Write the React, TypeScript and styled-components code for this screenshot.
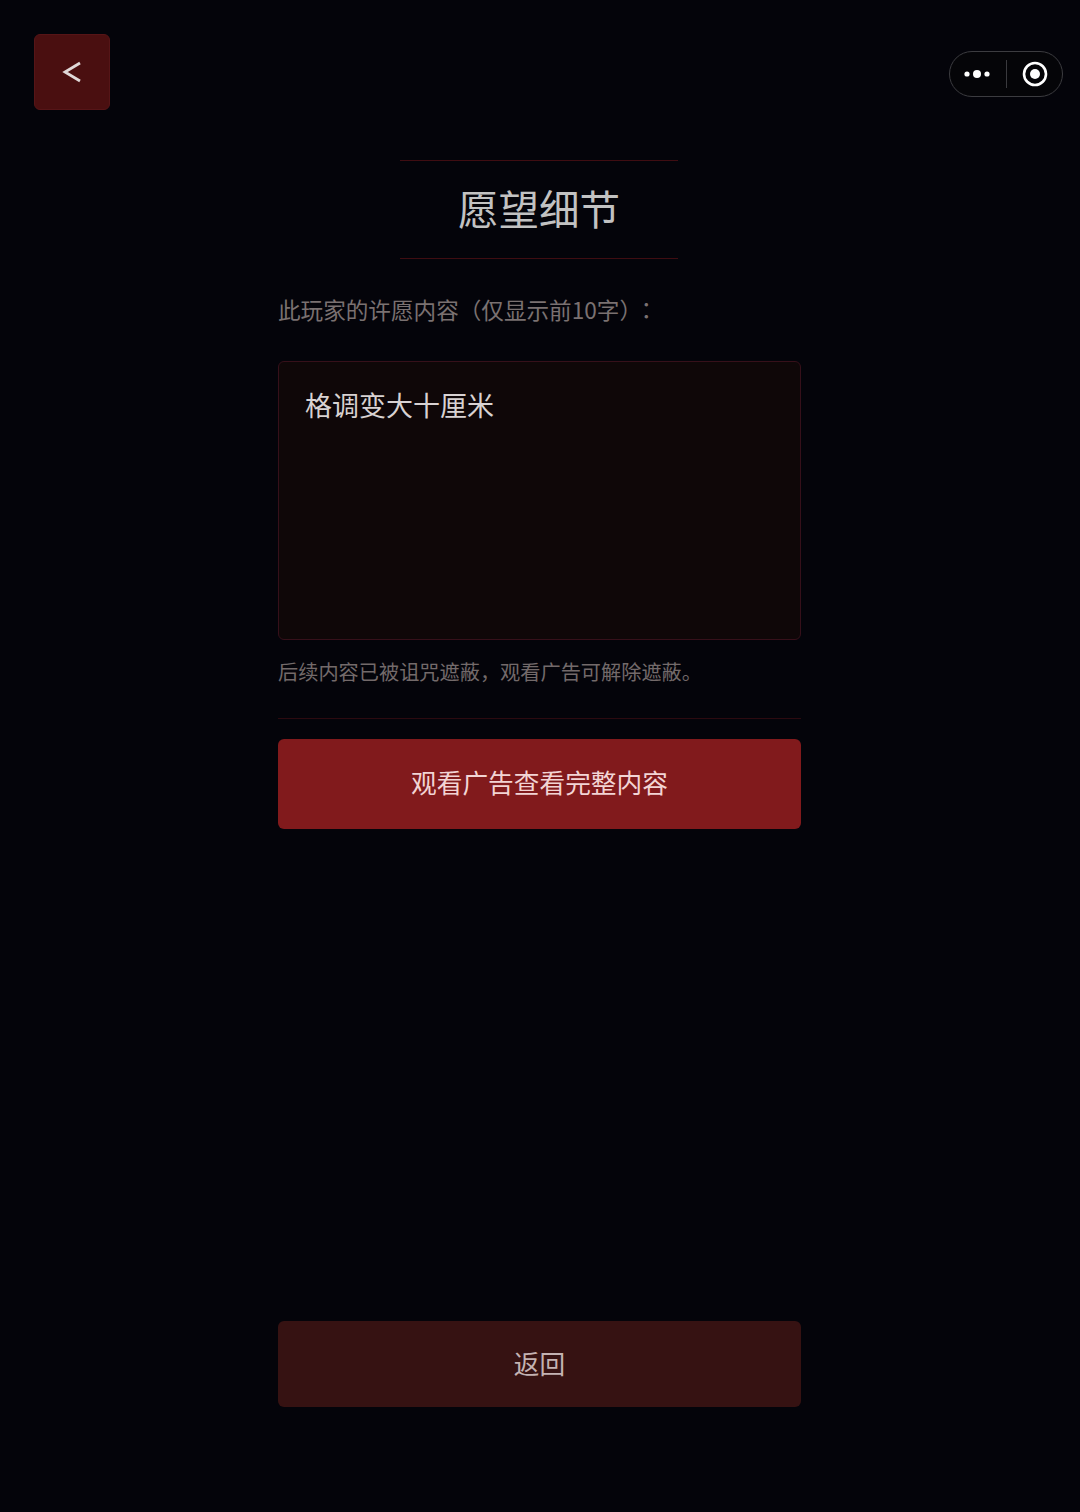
import React from 'react';
import styled, { createGlobalStyle } from 'styled-components';

const GlobalStyle = createGlobalStyle`
  html, body {
    margin: 0;
    padding: 0;
    background: #04040a;
  }
  * {
    box-sizing: border-box;
  }
`;

const Page = styled.div`
  position: relative;
  width: 1080px;
  height: 1512px;
  padding: 34px 34px 105px;
  display: flex;
  flex-direction: column;
  background: #04040a;
  font-family: 'Noto Sans CJK SC', 'Noto Sans', sans-serif;
  text-spacing-trim: space-all;
  overflow: hidden;
`;

const BackButton = styled.button`
  width: 76px;
  height: 76px;
  padding: 0;
  display: flex;
  align-items: center;
  justify-content: center;
  align-self: flex-start;
  background: #4a0f10;
  border: 1px solid #561517;
  border-radius: 6px;
  color: #e0d8d8;
`;

// Капсула мини-программы
const Capsule = styled.div`
  position: absolute;
  top: 51px;
  left: 949px;
  width: 114px;
  height: 46px;
  display: flex;
  align-items: center;
  border: 1px solid #3c3c40;
  border-radius: 23px;
  background: #050508;
`;

const CapsulePart = styled.div<{ $shift: number }>`
  flex: 1;
  height: 100%;
  padding-left: ${props => (props.$shift > 0 ? props.$shift : 0)}px;
  padding-right: ${props => (props.$shift < 0 ? -props.$shift : 0)}px;
  display: flex;
  align-items: center;
  justify-content: center;
`;

const CapsuleDivider = styled.div`
  width: 1px;
  height: 28px;
  background: #3a3a3e;
`;

const TitleBlock = styled.div`
  width: 278px;
  height: 99px;
  margin: 50px 0 0 366px;
  padding-bottom: 4px;
  display: flex;
  align-items: center;
  justify-content: center;
  border-top: 1px solid #3f0d12;
  border-bottom: 1px solid #3f0d12;
`;

const Title = styled.h1`
  margin: 0;
  font-size: 40.5px;
  line-height: 50px;
  font-weight: 400;
  color: #c2c2c2;
`;

const Column = styled.div`
  width: 523px;
  margin-left: 244px;
  flex: 1;
  display: flex;
  flex-direction: column;
`;

const Label = styled.p`
  margin: 35px 0 0;
  font-size: 22.6px;
  line-height: 32px;
  color: #7a7171;
  white-space: nowrap;
`;

// Скобка и двоеточие: двоеточие по центру клетки, как в оригинале
const ClosingPunctuation = styled.span`
  font-family: 'Noto Sans CJK TC', sans-serif;
  letter-spacing: -7px;
`;

const WishBox = styled.div`
  height: 279px;
  margin-top: 35px;
  padding: 23px 26px;
  background: #0f0708;
  border: 1px solid #36101a;
  border-radius: 6px;
`;

const WishText = styled.p`
  margin: 0;
  font-size: 27px;
  line-height: 40px;
  color: #d8d2d2;
`;

const Note = styled.p`
  margin: 17px 0 0;
  font-size: 20.2px;
  line-height: 30px;
  color: #736a6a;
  white-space: nowrap;
`;

const Divider = styled.div`
  height: 1px;
  margin-top: 31px;
  background: #2c0a10;
`;

const ActionButton = styled.button<{ $muted?: boolean }>`
  width: 100%;
  height: ${props => (props.$muted ? '86px' : '90px')};
  margin-top: ${props => (props.$muted ? 'auto' : '20px')};
  padding: 0 0 ${props => (props.$muted ? '2px' : '5px')};
  border: none;
  border-radius: 6px;
  background: ${props => (props.$muted ? '#361212' : '#811a1c')};
  color: ${props => (props.$muted ? '#c4b2b2' : '#f2d4d4')};
  font-family: inherit;
  font-size: 25.7px;
  line-height: 36px;
`;

const App: React.FC = () => {
  return (
    <Page>
      <GlobalStyle />
      <BackButton aria-label="返回">
        <svg width="20" height="24" viewBox="0 0 20 24" fill="none" stroke="currentColor" strokeWidth="2.8">
          <path d="M18 3 L3 12 L18 21" />
        </svg>
      </BackButton>

      <Capsule>
        <CapsulePart $shift={-1}>
          <svg width="26" height="10" viewBox="0 0 26 10" fill="#ffffff">
            <circle cx="3" cy="5" r="2.6" />
            <circle cx="13" cy="5" r="4" />
            <circle cx="23" cy="5" r="2.6" />
          </svg>
        </CapsulePart>
        <CapsuleDivider />
        <CapsulePart $shift={1}>
          <svg width="26" height="26" viewBox="0 0 26 26">
            <circle cx="13" cy="13" r="11" fill="none" stroke="#ffffff" strokeWidth="2.6" />
            <circle cx="13" cy="13" r="5" fill="#ffffff" />
          </svg>
        </CapsulePart>
      </Capsule>

      <TitleBlock>
        <Title>愿望细节</Title>
      </TitleBlock>

      <Column>
        <Label>此玩家的许愿内容（仅显示前10字<ClosingPunctuation>）：</ClosingPunctuation></Label>
        <WishBox>
          <WishText>格调变大十厘米</WishText>
        </WishBox>
        <Note>后续内容已被诅咒遮蔽，观看广告可解除遮蔽。</Note>
        <Divider />
        <ActionButton>观看广告查看完整内容</ActionButton>
        <ActionButton $muted>返回</ActionButton>
      </Column>
    </Page>
  );
};

export default App;
